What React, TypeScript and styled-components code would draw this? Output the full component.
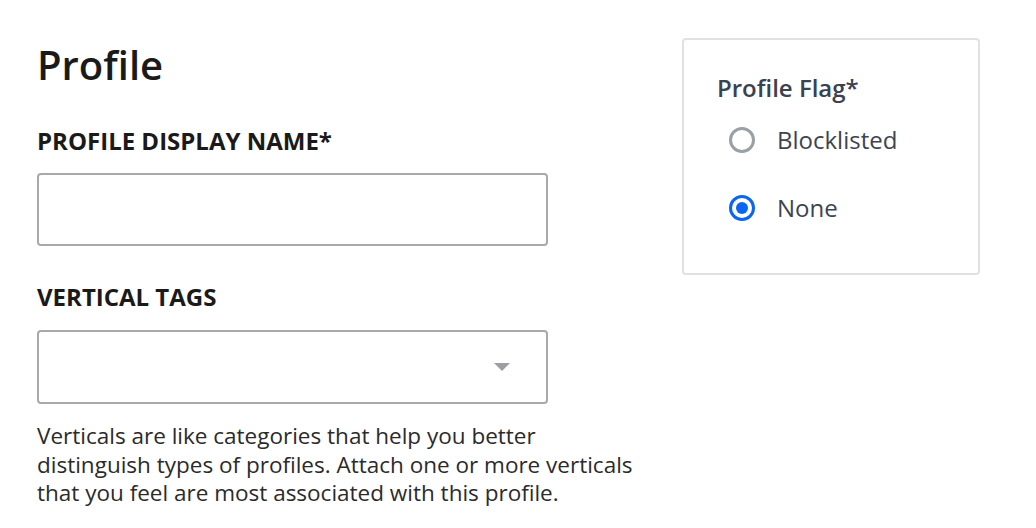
import React from "react";
import styled, { createGlobalStyle } from "styled-components";

const GlobalStyle = createGlobalStyle`
  html, body {
    margin: 0;
    padding: 0;
    background: #ffffff;
  }
  body {
    font-family: "Open Sans", "Noto Sans", sans-serif;
    color: #1a1a1a;
  }
`;

const Page = styled.div`
  display: flex;
  align-items: flex-start;
  gap: 49px;
  padding: 38px 0 0 37px;
`;

const FormColumn = styled.div`
  display: flex;
  flex-direction: column;
  width: 596px;
`;

const Title = styled.h1`
  margin: 0;
  font-size: 40px;
  font-weight: 600;
  line-height: 54px;
  color: #1a1a1a;
`;

const FieldLabel = styled.label<{ $top: number }>`
  display: block;
  margin-top: ${(p) => p.$top}px;
  font-size: 24px;
  font-weight: 700;
  line-height: 30px;
  color: #1a1a1a;
`;

const TextInput = styled.input`
  box-sizing: border-box;
  width: 511px;
  height: 73px;
  margin-top: 17px;
  border: 2px solid #a9a9ad;
  border-radius: 4px;
  background: #fff;
  padding: 0 16px;
  font: inherit;
  font-size: 22px;
  outline: none;
`;

const SelectBox = styled.div`
  box-sizing: border-box;
  display: flex;
  align-items: center;
  justify-content: flex-end;
  width: 511px;
  height: 74px;
  margin-top: 18px;
  border: 2px solid #a9a9ad;
  border-radius: 4px;
  background: #fff;
  padding-right: 36px;
`;

const Caret = styled.span`
  width: 0;
  height: 0;
  border-left: 8px solid transparent;
  border-right: 8px solid transparent;
  border-top: 8px solid #9d9da2;
`;

const HelpText = styled.p`
  margin: 18px 0 0;
  font-size: 22.5px;
  line-height: 28.5px;
  color: #2b2b2b;
`;

const FlagCard = styled.fieldset`
  box-sizing: border-box;
  width: 298px;
  height: 237px;
  margin: 0;
  padding: 33px 0 0 33px;
  border: 2px solid #dfe1e5;
  border-radius: 4px;
`;

const FlagTitle = styled.legend`
  float: left;
  width: 100%;
  padding: 0;
  font-size: 24px;
  font-weight: 600;
  line-height: 30px;
  color: #3a4150;
`;

const OptionList = styled.div`
  clear: both;
  display: flex;
  flex-direction: column;
  gap: 38px;
  padding: 22px 0 0 12px;
`;

const Option = styled.label`
  display: flex;
  align-items: center;
  gap: 22px;
  font-size: 24px;
  line-height: 30px;
  color: #3d4451;
`;

const Radio = styled.span<{ $checked: boolean }>`
  box-sizing: border-box;
  display: inline-flex;
  align-items: center;
  justify-content: center;
  width: 26px;
  height: 26px;
  border-radius: 50%;
  border: 3px solid ${(p) => (p.$checked ? "#0a66f0" : "#9aa0a6")};
  &::after {
    content: "";
    display: ${(p) => (p.$checked ? "block" : "none")};
    width: 12px;
    height: 12px;
    border-radius: 50%;
    background: #0a66f0;
  }
`;

export default function App() {
  const options = [
    { label: "Blocklisted", checked: false },
    { label: "None", checked: true },
  ];

  return (
    <>
      <GlobalStyle />
      <Page>
        <FormColumn>
          <Title>Profile</Title>
          <FieldLabel $top={34}>PROFILE DISPLAY NAME*</FieldLabel>
          <TextInput />
          <FieldLabel $top={36}>VERTICAL TAGS</FieldLabel>
          <SelectBox>
            <Caret />
          </SelectBox>
          <HelpText>
            Verticals are like categories that help you better distinguish
            types of profiles. Attach one or more verticals that you feel are
            most associated with this profile.
          </HelpText>
        </FormColumn>
        <FlagCard>
          <FlagTitle>Profile Flag*</FlagTitle>
          <OptionList>
            {options.map((o) => (
              <Option key={o.label}>
                <Radio $checked={o.checked} />
                {o.label}
              </Option>
            ))}
          </OptionList>
        </FlagCard>
      </Page>
    </>
  );
}
